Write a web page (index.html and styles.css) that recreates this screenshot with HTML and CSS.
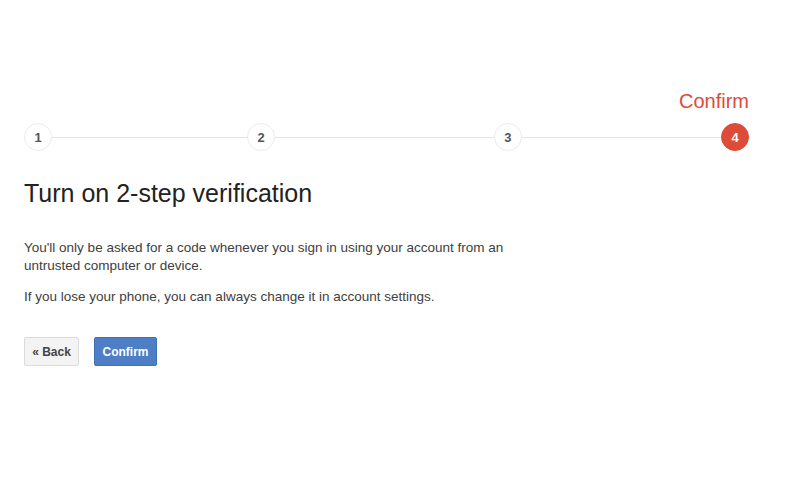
FILE: index.html
```html
<!DOCTYPE html>
<html lang="en">
<head>
    <meta charset="UTF-8">
    <title>2-step verification</title>
    <link rel="stylesheet" href="styles.css">
</head>
<body>
    <div class="container">
        <div class="step-label">Confirm</div>
        <div class="steps">
            <div class="step">1</div>
            <div class="line line-a"></div>
            <div class="step">2</div>
            <div class="line line-b"></div>
            <div class="step">3</div>
            <div class="line line-c"></div>
            <div class="step active">4</div>
        </div>

        <h1>Turn on 2-step verification</h1>

        <p>You'll only be asked for a code whenever you sign in using your account from an<br>untrusted computer or device.</p>
        <p>If you lose your phone, you can always change it in account settings.</p>

        <div class="actions">
            <button class="btn btn-back">&laquo; Back</button>
            <button class="btn btn-confirm">Confirm</button>
        </div>
    </div>
</body>
</html>
```

FILE: styles.css
```css
body {
    margin: 0;
    background: #fff;
    font-family: Arial, "Liberation Sans", sans-serif;
    color: #404040;
}

.container {
    width: 725px;
    padding: 89px 0 0 24px;
}

.step-label {
    text-align: right;
    color: #dd4b39;
    font-size: 20px;
    line-height: 24px;
    margin-bottom: 10px;
}

.steps {
    display: flex;
    align-items: center;
}

.step {
    width: 28px;
    height: 28px;
    box-sizing: border-box;
    border: 1px solid #ebebeb;
    border-radius: 50%;
    display: flex;
    align-items: center;
    justify-content: center;
    font-size: 13px;
    font-weight: bold;
    color: #555;
    background: #fff;
}

.step.active {
    background: #dd4b39;
    border-color: #dd4b39;
    color: #fff;
}

.line {
    height: 1px;
    background: #e5e5e5;
}

.line-a { flex: 197; }
.line-b { flex: 221; }
.line-c { flex: 201; }

h1 {
    font-size: 25px;
    font-weight: normal;
    color: #222;
    margin: 27px 0 31px;
    line-height: 30px;
}

p {
    font-size: 13.5px;
    line-height: 18px;
    margin: 0 0 13px;
    color: #404040;
}

.actions {
    margin-top: 31px;
    display: flex;
    gap: 15px;
}

.btn {
    font-family: Arial, "Liberation Sans", sans-serif;
    font-size: 12px;
    font-weight: bold;
    height: 29px;
    padding: 0 6px;
    border-radius: 2px;
    cursor: pointer;
}

.btn-back {
    background: #f3f3f3;
    border: 1px solid #dcdcdc;
    color: #444;
    width: 55px;
}

.btn-confirm {
    background: #4d7ec6;
    border: 1px solid #3f6fb5;
    color: #fff;
    width: 63px;
}
```
